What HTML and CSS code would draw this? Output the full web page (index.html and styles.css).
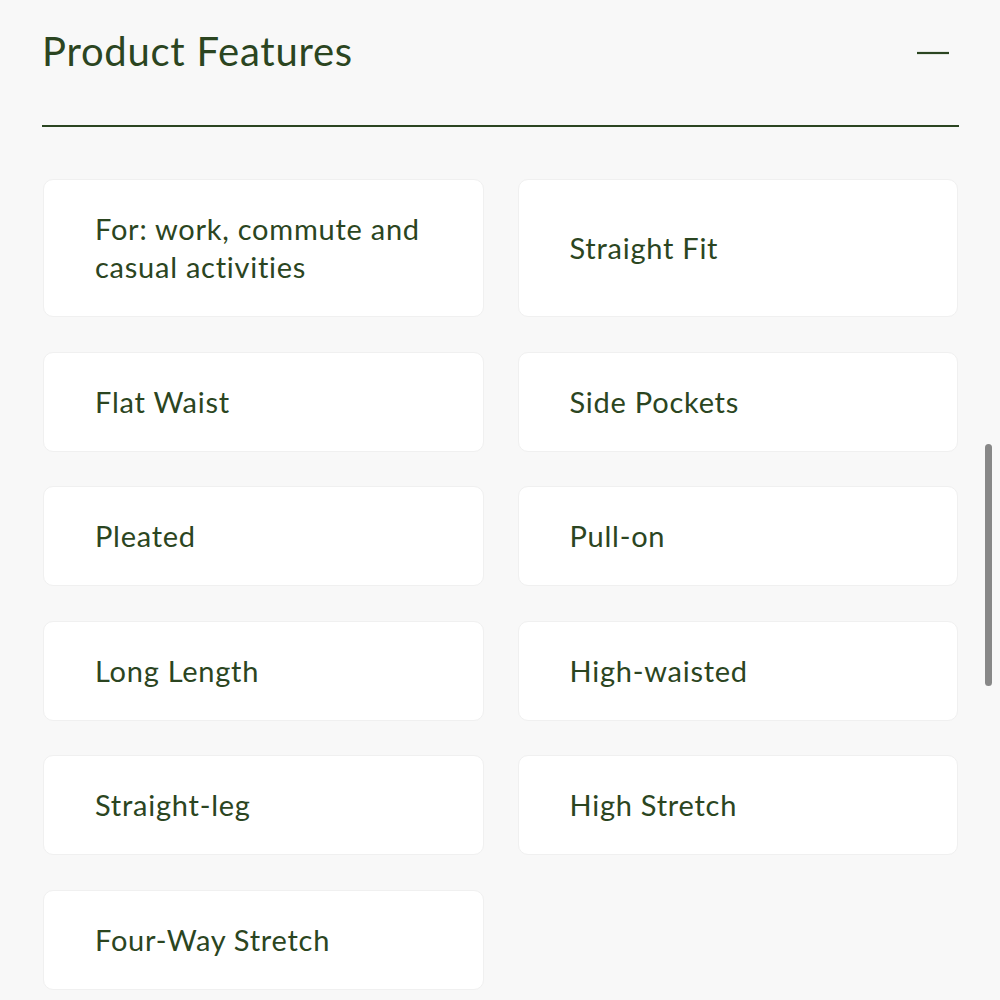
FILE: index.html
```html
<!DOCTYPE html>
<html lang="en">
<head>
<meta charset="utf-8">
<title>Product Features</title>
<link rel="stylesheet" href="styles.css">
</head>
<body>
<section class="features">
  <header class="features-head">
    <h2 class="features-title">Product Features</h2>
    <button class="toggle" aria-label="Collapse">
      <svg width="32" height="4" viewBox="0 0 32 4"><line x1="0" y1="2" x2="32" y2="2" stroke="#2b4521" stroke-width="2.2"/></svg>
    </button>
  </header>
  <div class="features-grid">
    <div class="feature">For: work, commute and casual activities</div>
    <div class="feature">Straight Fit</div>
    <div class="feature">Flat Waist</div>
    <div class="feature">Side Pockets</div>
    <div class="feature">Pleated</div>
    <div class="feature">Pull-on</div>
    <div class="feature">Long Length</div>
    <div class="feature">High-waisted</div>
    <div class="feature">Straight-leg</div>
    <div class="feature">High Stretch</div>
    <div class="feature">Four-Way Stretch</div>
  </div>
</section>
<div class="scrollbar"></div>
</body>
</html>
```
FILE: styles.css
```css
html, body {
  margin: 0;
  padding: 0;
  background: #f8f8f8;
}
body {
  font-family: Lato, "Noto Sans", sans-serif;
  color: #2b4521;
  height: 1000px;
  overflow: hidden;
}
.features {
  padding: 0 41px 0 42px;
}
.features-head {
  display: flex;
  align-items: center;
  justify-content: space-between;
  height: 127px;
  border-bottom: 2px solid #2b4521;
  box-sizing: border-box;
  margin-bottom: 52px;
}
.features-title {
  margin: 0 0 24px 0;
  font-size: 40px;
  font-weight: 400;
  line-height: 48px;
  letter-spacing: 0.75px;
}
.toggle {
  border: 0;
  background: none;
  padding: 0;
  margin: 0 10px 20px 0;
  display: flex;
  width: 32px;
  height: 4px;
  cursor: pointer;
}
.features-grid {
  display: grid;
  grid-template-columns: 1fr 1fr;
  column-gap: 34px;
  row-gap: 34.6px;
  padding: 0 1px;
}
.feature {
  display: flex;
  align-items: center;
  background: #ffffff;
  border: 1px solid #f0f0f0;
  border-radius: 10px;
  padding: 30px 40px 30px 51px;
  font-size: 29px;
  line-height: 38px;
  letter-spacing: 0.75px;
}
.scrollbar {
  position: fixed;
  right: 8px;
  top: 444px;
  width: 7px;
  height: 242px;
  border-radius: 4px;
  background: #888888;
}
```
